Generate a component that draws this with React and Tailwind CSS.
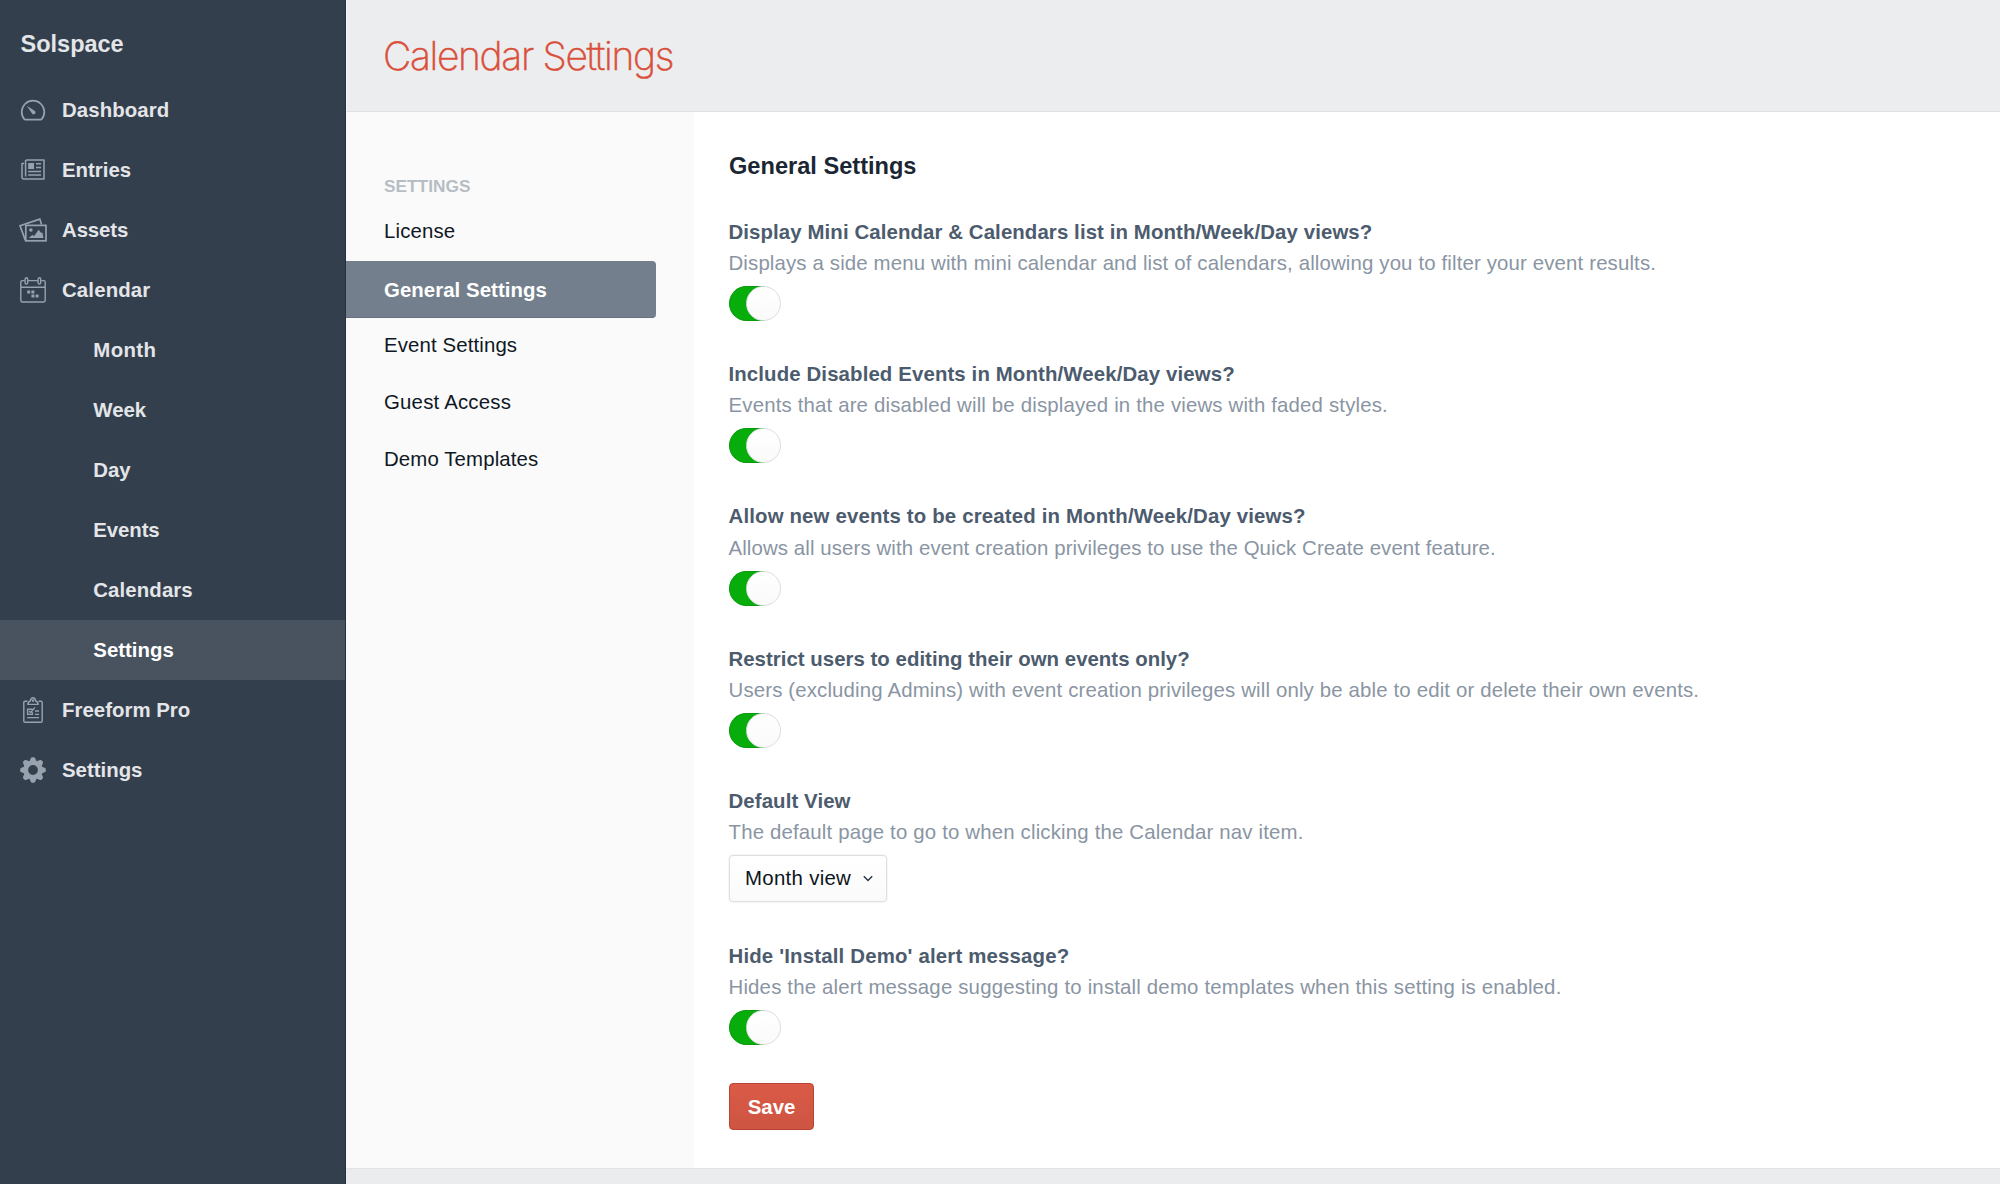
const DashboardIcon = () => (
  <svg width="26" height="22" viewBox="0 0 26 22" fill="none" stroke="#98a2ae" strokeWidth="1.7" strokeLinejoin="round">
    <path d="M4.3 20.2 A11.3 11.3 0 1 1 21.7 20.2 Q21.3 20.6 20.7 20.6 H5.3 Q4.7 20.6 4.3 20.2Z" />
    <path d="M6.8 6.8 L14.9 12 A1.9 1.9 0 0 1 12.2 14.8 Z" fill="#98a2ae" stroke="none" />
  </svg>
);

const EntriesIcon = () => (
  <svg width="24" height="21" viewBox="0 0 24 21" fill="none" stroke="#98a2ae" strokeWidth="1.5">
    <path d="M5 .9 H23 V20 H3 Q1 20 1 18 V4.4 H3.2" strokeLinejoin="round" />
    <path d="M4.6 1 V17.5" />
    <path d="M15 4.8 H20 M15 8.6 H20 M7.2 12.4 H20 M7.2 16 H20" />
    <rect x="7.2" y="4" width="5.8" height="6" fill="#98a2ae" stroke="none" />
  </svg>
);

const AssetsIcon = () => (
  <svg width="28" height="24" viewBox="0 0 28 24" fill="none" stroke="#98a2ae" strokeWidth="1.7">
    <path d="M22.6 6.4 L20.8 1.1 L1 7.8 L6.4 22.4" />
    <rect x="6.8" y="7.4" width="20.2" height="15.4" />
    <circle cx="11.9" cy="12" r="1.8" fill="#98a2ae" stroke="none" />
    <path d="M9.8 20 L13.2 16.9 L15.2 18 L19.6 11.8 L22.2 15 L23.3 14.2 L24.5 20Z" fill="#98a2ae" stroke="none" />
  </svg>
);

const CalendarIcon = () => (
  <svg width="26" height="26" viewBox="0 0 26 26" fill="none" stroke="#98a2ae" strokeWidth="1.4">
    <path d="M4.8 3.6 H2.2 Q.8 3.6 .8 5 V23.6 Q.8 25 2.2 25 H23.8 Q25.2 25 25.2 23.6 V5 Q25.2 3.6 23.8 3.6 H21.2 M7.8 3.6 H18 M.8 10.2 H25.2" />
    <rect x="5.1" y=".8" width="2.6" height="6.2" rx="1.3" />
    <rect x="18.1" y=".8" width="2.6" height="6.2" rx="1.3" />
    <path d="M7.2 13.6h3v3h-3z M11.4 13.6h3v3h-3z M11.4 17.6h3v3h-3z M15.6 17.6h3v3h-3z" fill="#98a2ae" stroke="none" />
  </svg>
);

const FreeformIcon = () => (
  <svg width="20" height="26" viewBox="0 0 20 26" fill="none" stroke="#98a2ae" strokeWidth="1.4" strokeLinejoin="round">
    <path d="M4.4 4.2 H2 Q.8 4.2 .8 5.4 V24 Q.8 25.2 2 25.2 H18 Q19.2 25.2 19.2 24 V5.4 Q19.2 4.2 18 4.2 H15.6" />
    <path d="M4.8 7.4 Q4.9 4.8 7.3 4 Q8 .8 10 .8 Q12 .8 12.7 4 Q15.1 4.8 15.2 7.4Z" />
    <circle cx="10" cy="3.6" r=".6" />
    <path d="M9.6 12.2 H4.6 V17.4 H9.4 V15.2 M6.2 14 L7.6 15.6 L12 10.4 M12 14 H16 M12 17.4 H16 M4.2 20.6 H16" />
  </svg>
);

const GearIcon = () => (
  <svg width="26" height="26" viewBox="-13 -13 26 26" fill="#98a2ae">
    <path
      fillRule="evenodd"
      d="M-9.6 0a9.6 9.6 0 1 0 19.2 0a9.6 9.6 0 1 0-19.2 0Z M-4.9 0a4.9 4.9 0 1 1 9.8 0a4.9 4.9 0 1 1-9.8 0Z"
    />
    {[0, 45, 90, 135, 180, 225, 270, 315].map((angle) => (
      <path key={angle} transform={`rotate(${angle})`} d="M-3.7 -8.2 L-2.1 -12 Q-1.7 -12.8 -.9 -12.8 H.9 Q1.7 -12.8 2.1 -12 L3.7 -8.2Z" />
    ))}
  </svg>
);

const mainNav = [
  { label: "Dashboard", Icon: DashboardIcon, spacing: "tracking-[0.1px]" },
  { label: "Entries", Icon: EntriesIcon, spacing: "tracking-[0px]" },
  { label: "Assets", Icon: AssetsIcon, spacing: "tracking-[-0.1px]" },
  { label: "Calendar", Icon: CalendarIcon, spacing: "tracking-[0.14px]" },
];

const calendarNav = [
  { label: "Month", spacing: "tracking-[0.35px]" },
  { label: "Week", spacing: "tracking-[0px]" },
  { label: "Day", spacing: "tracking-[0px]" },
  { label: "Events", spacing: "tracking-[-0.1px]" },
  { label: "Calendars", spacing: "tracking-[0.1px]" },
  { label: "Settings", spacing: "tracking-[0px]", active: true },
];

const bottomNav = [
  { label: "Freeform Pro", Icon: FreeformIcon, spacing: "tracking-[0.02px]" },
  { label: "Settings", Icon: GearIcon, spacing: "tracking-[0px]" },
];

const settings = [
  {
    label: "Display Mini Calendar & Calendars list in Month/Week/Day views?",
    labelSpacing: "tracking-[0.1px]",
    text: "Displays a side menu with mini calendar and list of calendars, allowing you to filter your event results.",
    textSpacing: "tracking-[0.145px]",
  },
  {
    label: "Include Disabled Events in Month/Week/Day views?",
    labelSpacing: "tracking-[0.12px]",
    text: "Events that are disabled will be displayed in the views with faded styles.",
    textSpacing: "tracking-[0.165px]",
  },
  {
    label: "Allow new events to be created in Month/Week/Day views?",
    labelSpacing: "tracking-[0.16px]",
    text: "Allows all users with event creation privileges to use the Quick Create event feature.",
    textSpacing: "tracking-[0.106px]",
  },
  {
    label: "Restrict users to editing their own events only?",
    labelSpacing: "tracking-[0.025px]",
    text: "Users (excluding Admins) with event creation privileges will only be able to edit or delete their own events.",
    textSpacing: "tracking-[0.15px]",
  },
  {
    label: "Default View",
    labelSpacing: "tracking-[0.1px]",
    text: "The default page to go to when clicking the Calendar nav item.",
    textSpacing: "tracking-[0.17px]",
    select: true,
  },
  {
    label: "Hide 'Install Demo' alert message?",
    labelSpacing: "tracking-[0.175px]",
    text: "Hides the alert message suggesting to install demo templates when this setting is enabled.",
    textSpacing: "tracking-[0.175px]",
  },
];

function NavItem({ label, Icon, spacing }) {
  return (
    <a className="flex h-15 items-center pl-[13px]">
      <span className="flex w-10 justify-center pb-px">
        <Icon />
      </span>
      <span className={`ml-[9px] ${spacing}`}>{label}</span>
    </a>
  );
}

function Toggle() {
  return (
    <button className="flex h-[35px] w-[52px]">
      <span className="h-[35px] w-[35px] shrink-0 rounded-l-full border border-r-0 border-[#089a0b] bg-[#07ad0a]" />
      <span className="-ml-[18px] size-[35px] shrink-0 rounded-full border border-[#dcdddf] bg-linear-to-b from-white to-[#fafafa]" />
    </button>
  );
}

function ViewSelect() {
  return (
    <button className="flex h-[47px] w-[158px] items-center justify-between rounded-[4px] border border-[#dcdee0] bg-linear-to-b from-white to-[#fafafa] pr-[13px] pb-px pl-[15px] text-[#0d1520] shadow-[0_0_2px_rgba(0,0,0,0.12)]">
      <span className="tracking-[0.3px]">Month view</span>
      <svg width="10" height="7" viewBox="0 0 10 7" fill="none" stroke="#29323d" strokeWidth="1.4">
        <path d="M.8 1.2 L5 5.4 L9.2 1.2" />
      </svg>
    </button>
  );
}

export default function App() {
  return (
    <div className="flex h-[1184px] w-[2000px] overflow-hidden bg-[#ebedef] font-['Liberation_Sans',Arial,sans-serif] text-[20.4px] whitespace-nowrap">
      <nav className="w-[346px] shrink-0 border-r border-[#253040] bg-[#333f4d] font-bold text-[#e3e5e8]">
        <div className="flex h-20 items-center pt-2.5 pl-[20.5px] text-[23.5px] leading-none">Solspace</div>
        {mainNav.map((item) => (
          <NavItem key={item.label} {...item} />
        ))}
        {calendarNav.map(({ label, spacing, active }) => (
          <a
            key={label}
            className={`flex h-15 items-center pl-[93.3px] ${active ? "bg-[#48535f] text-white" : ""}`}
          >
            <span className={spacing}>{label}</span>
          </a>
        ))}
        {bottomNav.map((item) => (
          <NavItem key={item.label} {...item} />
        ))}
      </nav>

      <div className="flex min-w-0 grow flex-col">
        <header className="flex h-[112px] shrink-0 items-center border-b border-l border-b-[#dfe1e4] border-l-[#f6f7f8] pl-[36px]">
          <h1 className="font-['Inter',sans-serif] text-[39px] leading-none font-extralight tracking-[-1.35px] text-[#da4f3a] [-webkit-text-stroke:0.5px_#da4f3a]">
            Calendar Settings
          </h1>
        </header>

        <div className="flex h-[1056px] shrink-0">
          <aside className="w-[348px] shrink-0 bg-[#fafafa] text-[#0f1824]">
            <h2 className="mt-[61px] flex h-[28px] items-center pl-[38px] text-[17.3px] font-bold text-[#b6bdc5]">
              SETTINGS
            </h2>
            <div className="flex h-[60px] items-center pt-px pl-[38px] tracking-[0.15px]">License</div>
            <div className="flex h-[57px] w-[310px] items-center rounded-r-[4px] border-b border-[#66727f] bg-[#737f8c] pt-[3px] pl-[38px] font-bold tracking-[0.05px] text-white">
              General Settings
            </div>
            <div className="flex h-[57px] items-center pb-[2px] pl-[38px] tracking-[0.12px]">Event Settings</div>
            <div className="flex h-[57px] items-center pb-[2px] pl-[38px] tracking-[0.2px]">Guest Access</div>
            <div className="flex h-[57px] items-center pb-[2px] pl-[38px] tracking-[0.12px]">Demo Templates</div>
          </aside>

          <main className="flex grow flex-col bg-white pl-[34.5px]">
            <h2 className="mt-[39px] mb-[49px] flex h-[31px] shrink-0 items-center pl-[0.5px] text-[23.6px] font-bold text-[#1b2633]">
              General Settings
            </h2>
            <div className="-mt-[15px] flex flex-col">
              {settings.map(({ label, labelSpacing, text, textSpacing, select }) => (
                <section key={label} className={select ? "h-[154.9px]" : "h-[142.3px]"}>
                  <h3 className={`flex h-[31px] items-center pt-px font-bold text-[#4c5b6d] ${labelSpacing}`}>{label}</h3>
                  <p className={`mb-[7px] flex h-[32px] items-center pt-[0.5px] text-[#8a95a3] ${textSpacing}`}>{text}</p>
                  <div className="pl-[0.5px]">{select ? <ViewSelect /> : <Toggle />}</div>
                </section>
              ))}
            </div>
            <button className="mt-[0.5px] ml-[0.5px] flex h-[47px] w-[85px] items-center justify-center rounded-[4px] border border-[#b94431] bg-linear-to-b from-[#da5a47] to-[#cd5542] pt-px font-bold text-white">
              Save
            </button>
          </main>
        </div>

        <footer className="grow border-t border-[#e1e3e7] bg-[#ebecee]" />
      </div>
    </div>
  );
}
